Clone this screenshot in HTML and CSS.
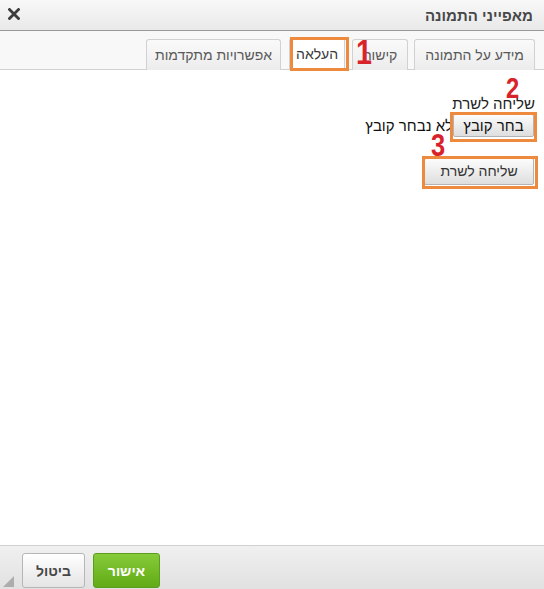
FILE: index.html
```html
<!DOCTYPE html>
<html lang="he" dir="rtl">
<head>
  <meta charset="UTF-8">
  <meta name="viewport" content="width=544, initial-scale=1.0">
  <title>מאפייני התמונה</title>
  <link rel="stylesheet" href="styles.css">
</head>
<body>
  <div class="dialog">
    <div class="titlebar">
      <span class="title">מאפייני התמונה</span>
      <a class="close" href="#" title="סגירה">
        <svg width="12" height="12" viewBox="0 0 12 12">
          <path d="M1.5 1.5 L10.5 10.5 M10.5 1.5 L1.5 10.5" stroke="#3d3d3d" stroke-width="2.8" stroke-linecap="square"/>
        </svg>
      </a>
    </div>

    <div class="tabs">
      <span class="tab">מידע על התמונה</span>
      <span class="tab link-tab">קישור</span>
      <span class="tab active">העלאה</span>
      <span class="tab adv-tab">אפשרויות מתקדמות</span>
    </div>

    <div class="content">
      <div class="field-label">שליחה לשרת</div>
      <div class="file-row">
        <span class="btn pick">בחר קובץ</span>
        <span class="file-name">לא נבחר קובץ</span>
      </div>
      <div class="send-row">
        <span class="btn send">שליחה לשרת</span>
      </div>
    </div>

    <div class="footer">
      <button class="ok">אישור</button>
      <button class="cancel">ביטול</button>
      <span class="resize"></span>
    </div>
  </div>

  <!-- annotations drawn over the screenshot -->
  <span class="mark box-1"></span>
  <span class="mark box-2"></span>
  <span class="mark box-3"></span>
  <span class="num num-1">1</span>
  <span class="num num-2">2</span>
  <span class="num num-3">3</span>
</body>
</html>
```

FILE: styles.css
```css
body {
  margin: 0;
  font-family: Arial, "Liberation Sans", sans-serif;
  font-size: 13px;
  color: #333;
  position: relative;
}
.dialog {
  width: 544px;
  height: 589px;
  display: flex;
  flex-direction: column;
  background: #fff;
  overflow: hidden;
}

/* title bar */
.titlebar {
  height: 30px;
  border-bottom: 1px solid #999;
  background: linear-gradient(#f8f8f8, #e9e9e9);
  display: flex;
  align-items: center;
  justify-content: space-between;
  padding: 0 11px 0 7px;
}
.title {
  font-weight: bold;
  font-size: 15px;
  color: #474747;
}
.close {
  display: flex;
  width: 14px;
  height: 14px;
  align-items: center;
  justify-content: center;
  margin-top: -2px;
}

/* tabs */
.tabs {
  height: 38px;
  border-bottom: 1px solid #d1d1d1;
  background: #f8f8f8;
  display: flex;
  align-items: flex-end;
  padding-right: 9px;
  gap: 6px;
}
.tab {
  height: 30px;
  line-height: 30px;
  font-size: 14px;
  padding: 0 10px;
  border: 1px solid #d1d1d1;
  border-bottom: 0;
  border-radius: 3px 3px 0 0;
  background: linear-gradient(#fafafa, #ececec);
  color: #595959;
  margin-bottom: -1px;
}
.tab.link-tab {
  padding-left: 11px;
}
.tab.adv-tab {
  padding: 0 8px;
}
.tab.active {
  background: #fff;
  height: 31px;
  color: #383838;
  padding: 0 6px;
  margin-left: 2px;
  margin-right: 1px;
}

/* body */
.content {
  flex: 1;
  padding: 25px 9px 0;
}
.field-label {
  line-height: 17px;
  font-size: 15px;
  color: #222;
}
.file-row {
  display: flex;
  align-items: center;
  margin-top: 2px;
}
.btn {
  display: inline-block;
  border: 1px solid #b3b3b3;
  border-radius: 2px;
  background: linear-gradient(#fcfcfc, #dedede);
  color: #111;
  text-align: center;
}
.pick {
  width: 79px;
  height: 21px;
  line-height: 21px;
  font-size: 15px;
  margin-right: 1px;
}
.file-name {
  font-size: 15px;
  color: #111;
}
.send-row {
  margin-top: 21px;
  padding-right: 1px;
}
.send {
  width: 108px;
  height: 25px;
  line-height: 25px;
  font-size: 14px;
  color: #333;
}

/* footer */
.footer {
  height: 36px;
  border-top: 1px solid #d1d1d1;
  background: linear-gradient(#f0f0f0, #e1e1e1);
  display: flex;
  justify-content: flex-end;
  align-items: flex-start;
  gap: 8px;
  padding: 7px 0 0 22px;
  position: relative;
}
.footer button {
  height: 35px;
  font-family: Arial, "Liberation Sans", sans-serif;
  font-size: 14px;
  font-weight: bold;
  border-radius: 3px;
  padding: 0;
}
.ok {
  width: 67px;
  color: #fff;
  border: 1px solid #5b9e1d;
  background: linear-gradient(#86cc3a, #62aa16);
}
.cancel {
  width: 63px;
  color: #474747;
  border: 1px solid #b6b6b6;
  background: linear-gradient(#ffffff, #e4e4e4);
}
.resize {
  position: absolute;
  left: 3px;
  bottom: 2px;
  width: 0;
  height: 0;
  border-style: solid;
  border-width: 0 0 11px 11px;
  border-color: transparent transparent #adadad transparent;
}

/* orange boxes and red step numbers */
.mark {
  position: absolute;
  border: 3px solid #ee8a3d;
  box-sizing: border-box;
}
.box-1 { left: 290px; top: 37px; width: 59px; height: 34px; }
.box-2 { left: 450px; top: 112px; width: 87px; height: 30px; }
.box-3 { left: 422px; top: 156px; width: 116px; height: 33px; }
.num {
  position: absolute;
  font-family: Arial, "Liberation Sans", sans-serif;
  font-weight: bold;
  color: #d8232b;
  line-height: 1;
  transform: scaleX(0.82);
  transform-origin: left top;
}
.num-1 { left: 356px; top: 34px; font-size: 35px; }
.num-2 { left: 506px; top: 74px; font-size: 29px; }
.num-3 { left: 431px; top: 130px; font-size: 31px; }
```
